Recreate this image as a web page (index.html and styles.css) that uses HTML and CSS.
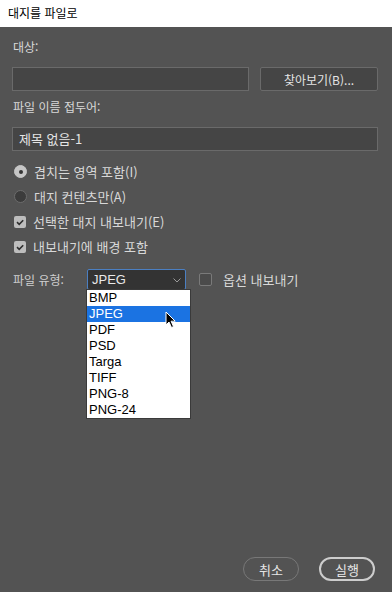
FILE: index.html
```html
<!DOCTYPE html>
<html lang="ko">
<head>
  <meta charset="UTF-8" />
  <title>대지를 파일로</title>
  <link rel="stylesheet" href="styles.css">
</head>
<body>
  <div class="window">
    <div class="titlebar">대지를 파일로</div>

    <div class="content">
      <div class="label">대상:</div>
      <div class="field-row">
        <div class="text-input wide"></div>
        <button class="browse">찾아보기(B)...</button>
      </div>

      <div class="label">파일 이름 접두어:</div>
      <div class="text-input">제목 없음-1</div>

      <div class="options">
        <div class="option">
          <span class="radio checked"></span>
          <span>겹치는 영역 포함(I)</span>
        </div>
        <div class="option">
          <span class="radio"></span>
          <span>대지 컨텐츠만(A)</span>
        </div>
        <div class="option">
          <span class="check checked">
            <svg viewBox="0 0 12 12" width="12" height="12"><path d="M3 6.2 L5.2 8.3 L9.2 4.2" fill="none" stroke="#2e2e2e" stroke-width="1.6"/></svg>
          </span>
          <span>선택한 대지 내보내기(E)</span>
        </div>
        <div class="option">
          <span class="check checked">
            <svg viewBox="0 0 12 12" width="12" height="12"><path d="M3 6.2 L5.2 8.3 L9.2 4.2" fill="none" stroke="#2e2e2e" stroke-width="1.6"/></svg>
          </span>
          <span>내보내기에 배경 포함</span>
        </div>
      </div>

      <div class="type-row">
        <span class="type-label">파일 유형:</span>
        <div class="select-wrap">
          <div class="select">
            <span>JPEG</span>
            <svg class="chevron" viewBox="0 0 8 5" width="8" height="5"><path d="M0.5 0.5 L4 4 L7.5 0.5" fill="none" stroke="#9a9a9a" stroke-width="1"/></svg>
          </div>
          <ul class="dropdown">
            <li>BMP</li>
            <li class="selected">JPEG</li>
            <li>PDF</li>
            <li>PSD</li>
            <li>Targa</li>
            <li>TIFF</li>
            <li>PNG-8</li>
            <li>PNG-24</li>
          </ul>
          <svg class="cursor" viewBox="0 0 12 18" width="12" height="18">
            <path d="M1 1 L1 14 L4 11 L6.5 16.5 L8.5 15.6 L6.1 10.2 L10.2 10.2 Z" fill="#000" stroke="#fff" stroke-width="1"/>
          </svg>
        </div>
        <span class="check small"></span>
        <span class="option-label">옵션 내보내기</span>
      </div>
    </div>

    <div class="footer">
      <button class="pill">취소</button>
      <button class="pill primary">실행</button>
    </div>
  </div>
</body>
</html>
```

FILE: styles.css
```css
body {
  margin: 0;
  padding: 0;
  background: #535353;
  font-family: "Noto Sans CJK KR", "Noto Sans", sans-serif;
  font-size: 12px;
  color: #d8d8d8;
}

.window {
  display: flex;
  flex-direction: column;
  min-height: 100vh;
}

.titlebar {
  height: 27px;
  line-height: 26px;
  background: #ffffff;
  color: #000000;
  padding-left: 8px;
}

.content {
  padding: 0 14px 0 12px;
}

.label {
  height: 16px;
  line-height: 16px;
  margin: 12px 0 12px 1px;
}

.label + .text-input {
  margin-top: 0;
}

.field-row {
  display: flex;
  gap: 11px;
}

.text-input {
  height: 22px;
  line-height: 21px;
  background: #454545;
  border: 1px solid #6a6a6a;
  padding: 0 6px;
  color: #e4e4e4;
  font-size: 13px;
}

.text-input.wide {
  flex: 1;
}

.field-row + .label {
  margin-top: 8px;
}

.browse {
  width: 118px;
  height: 24px;
  background: #454545;
  border: 1px solid #6a6a6a;
  border-radius: 2px;
  color: #e4e4e4;
  font-family: inherit;
  font-size: 12px;
  padding: 0;
}

.options {
  margin-top: 8px;
}

.option {
  display: flex;
  align-items: center;
  height: 25px;
  gap: 7px;
  padding-left: 2px;
  font-size: 13px;
}

.radio {
  width: 11px;
  height: 11px;
  border-radius: 50%;
  border: 1px solid #6c6c6c;
  background: #3c3c3c;
  position: relative;
}

.radio.checked {
  background: #c6c6c6;
  border-color: #c6c6c6;
}

.radio.checked::after {
  content: "";
  position: absolute;
  left: 3.5px;
  top: 3.5px;
  width: 4px;
  height: 4px;
  border-radius: 50%;
  background: #333;
}

.check {
  width: 12px;
  height: 12px;
  border-radius: 2px;
  display: flex;
  align-items: center;
  justify-content: center;
}

.check.checked {
  background: #bdbdbd;
}

.check.small {
  box-sizing: border-box;
  width: 13px;
  height: 13px;
  border: 1px solid #7a7a7a;
  background: #4b4b4b;
  margin-left: 13px;
}

.type-row {
  display: flex;
  align-items: center;
  margin-top: 10px;
  height: 20px;
}

.type-label {
  width: 74px;
  padding-left: 1px;
  color: #cfcfcf;
}

.select-wrap {
  position: relative;
}

.select {
  box-sizing: border-box;
  width: 99px;
  height: 21px;
  background: #333333;
  border: 1px solid #4b7fc2;
  border-radius: 2px;
  display: flex;
  align-items: center;
  justify-content: space-between;
  padding: 0 4px 0 4px;
  color: #e8e8e8;
  font-family: "Liberation Sans", sans-serif;
  font-size: 13px;
}

.chevron {
  margin-top: 2px;
}

.dropdown {
  position: absolute;
  left: -1px;
  top: 20px;
  width: 103px;
  margin: 0;
  padding: 0;
  list-style: none;
  background: #ffffff;
  border: 1px solid #3a3a3a;
  font-family: "Liberation Sans", sans-serif;
  font-size: 13px;
  color: #000000;
}

.dropdown li {
  height: 16px;
  line-height: 16px;
  padding-left: 2px;
}

.dropdown li.selected {
  background: #1b73e2;
  color: #ffffff;
}

.cursor {
  position: absolute;
  left: 78px;
  top: 42px;
}

.option-label {
  margin-left: 11px;
  font-size: 13px;
}

.footer {
  margin-top: auto;
  display: flex;
  justify-content: flex-end;
  gap: 20px;
  padding: 0 17px 11px 0;
}

.pill {
  box-sizing: border-box;
  width: 56px;
  height: 24px;
  border-radius: 12px;
  background: transparent;
  border: 1.5px solid #787878;
  color: #e6e6e6;
  font-family: "Noto Sans CJK KR", sans-serif;
  font-size: 13px;
  padding: 0;
}

.pill.primary {
  border: 2px solid #cdcdcd;
}
```
